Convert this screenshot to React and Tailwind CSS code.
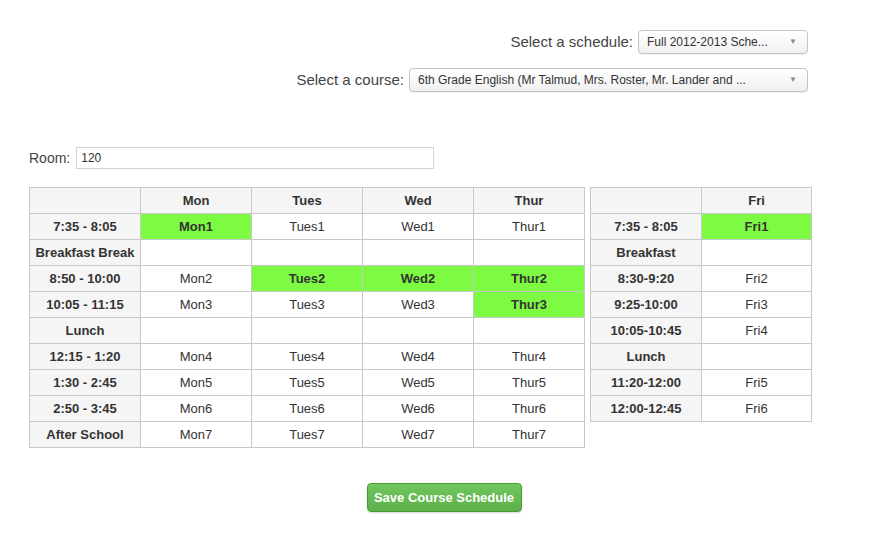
import React from 'react';

const mainRows = [
    ['7:35 - 8:05', ['Mon1', 'Tues1', 'Wed1', 'Thur1'], [0]],
    ['Breakfast Break', ['', '', '', ''], []],
    ['8:50 - 10:00', ['Mon2', 'Tues2', 'Wed2', 'Thur2'], [1, 2, 3]],
    ['10:05 - 11:15', ['Mon3', 'Tues3', 'Wed3', 'Thur3'], [3]],
    ['Lunch', ['', '', '', ''], []],
    ['12:15 - 1:20', ['Mon4', 'Tues4', 'Wed4', 'Thur4'], []],
    ['1:30 - 2:45', ['Mon5', 'Tues5', 'Wed5', 'Thur5'], []],
    ['2:50 - 3:45', ['Mon6', 'Tues6', 'Wed6', 'Thur6'], []],
    ['After School', ['Mon7', 'Tues7', 'Wed7', 'Thur7'], []],
];

const friRows = [
    ['7:35 - 8:05', 'Fri1', true],
    ['Breakfast', '', false],
    ['8:30-9:20', 'Fri2', false],
    ['9:25-10:00', 'Fri3', false],
    ['10:05-10:45', 'Fri4', false],
    ['Lunch', '', false],
    ['11:20-12:00', 'Fri5', false],
    ['12:00-12:45', 'Fri6', false],
];

function Select({ text, width }) {
    return (
        <div className={`${width} h-[24px] flex items-center justify-between pl-[8px] pr-[10px] border border-[#c4c4c4] rounded-[4px] bg-gradient-to-b from-white to-[#f0f0f0] text-[12px] text-[#333] shadow-[0_1px_1px_rgba(0,0,0,0.06)]`}>
            <span className="whitespace-nowrap overflow-hidden">{text}</span>
            <span className="text-[8px] text-[#888]">▼</span>
        </div>
    );
}

const th = 'h-[26px] border border-[#c8c8c8] bg-[#f5f5f5] font-bold text-center text-[#333] p-0';
const td = 'h-[26px] border border-[#c8c8c8] text-center text-[#333] p-0';
const hot = 'h-[26px] border border-[#c8c8c8] text-center font-bold text-[#333] bg-[#7dfb42] p-0';

function App() {
    return (
        <div className="w-[893px] h-[543px] bg-white text-[#333] font-['Liberation_Sans',Arial,sans-serif] pl-[29px] pt-[30px]">
            <div className="w-[779px] flex flex-col items-end gap-[14px]">
                <div className="flex items-center gap-[5px] text-[15px] text-[#444]">
                    <span>Select a schedule:</span>
                    <Select text="Full 2012-2013 Sche..." width="w-[170px]" />
                </div>
                <div className="flex items-center gap-[5px] text-[15px] text-[#444]">
                    <span>Select a course:</span>
                    <Select text="6th Grade English (Mr Talmud, Mrs. Roster, Mr. Lander and ..." width="w-[399px]" />
                </div>
            </div>

            <div className="mt-[55px] flex items-center gap-[6px] text-[14px] text-[#444]">
                <span>Room:</span>
                <div className="w-[358px] h-[22px] border border-[#d4d4d4] flex items-center pl-[4px] text-[12px] text-[#333]">120</div>
            </div>

            <div className="mt-[18px] flex items-start gap-[5px] text-[13px]">
                <table className="border-collapse table-fixed w-[556px]">
                    <thead>
                        <tr>
                            <th className={`${th} w-[111px]`}></th>
                            <th className={th}>Mon</th>
                            <th className={th}>Tues</th>
                            <th className={th}>Wed</th>
                            <th className={th}>Thur</th>
                        </tr>
                    </thead>
                    <tbody>
                        {mainRows.map(([time, cells, hi]) => (
                            <tr key={time}>
                                <th className={th}>{time}</th>
                                {cells.map((c, i) => (
                                    <td key={i} className={hi.includes(i) ? hot : td}>{c}</td>
                                ))}
                            </tr>
                        ))}
                    </tbody>
                </table>

                <table className="border-collapse table-fixed w-[222px]">
                    <thead>
                        <tr>
                            <th className={`${th} w-[111px]`}></th>
                            <th className={th}>Fri</th>
                        </tr>
                    </thead>
                    <tbody>
                        {friRows.map(([time, c, h]) => (
                            <tr key={time}>
                                <th className={th}>{time}</th>
                                <td className={h ? hot : td}>{c}</td>
                            </tr>
                        ))}
                    </tbody>
                </table>
            </div>

            <div className="w-[830px] flex justify-center mt-[35px]">
                <button className="w-[155px] h-[29px] rounded-[4px] border border-[#4a9a3a] bg-gradient-to-b from-[#72c65e] to-[#5cb04a] text-white font-bold text-[13px] shadow-[0_1px_2px_rgba(0,0,0,0.15)]">
                    Save Course Schedule
                </button>
            </div>
        </div>
    );
}

export default App;
